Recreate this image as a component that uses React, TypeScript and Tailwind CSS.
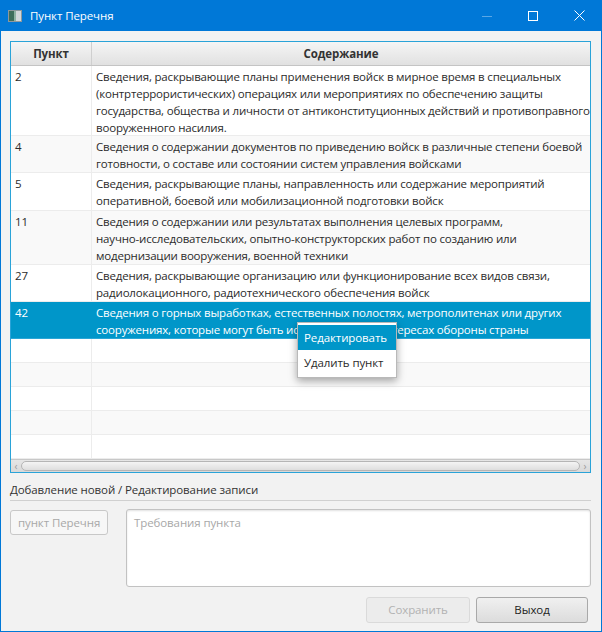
import React from "react";

const font = { fontFamily: '"Open Sans", "Noto Sans", sans-serif' };

const rows = [
  {
    n: "2",
    h: "h-[70px]",
    lines: [
      "Сведения, раскрывающие планы применения войск в мирное время в специальных",
      "(контртеррористических) операциях или мероприятиях по обеспечению защиты",
      "государства, общества и личности от антиконституционных действий и противоправного",
      "вооруженного насилия.",
    ],
  },
  {
    n: "4",
    h: "h-[37px]",
    lines: [
      "Сведения о содержании документов по приведению войск в различные степени боевой",
      "готовности, о составе или состоянии систем управления войсками",
    ],
  },
  {
    n: "5",
    h: "h-[38px]",
    lines: [
      "Сведения, раскрывающие планы, направленность или содержание мероприятий",
      "оперативной, боевой или мобилизационной подготовки войск",
    ],
  },
  {
    n: "11",
    h: "h-[54px]",
    lines: [
      "Сведения о содержании или результатах выполнения целевых программ,",
      "научно-исследовательских, опытно-конструкторских работ по созданию или",
      "модернизации вооружения, военной техники",
    ],
  },
  {
    n: "27",
    h: "h-[37px]",
    lines: [
      "Сведения, раскрывающие организацию или функционирование всех видов связи,",
      "радиолокационного, радиотехнического обеспечения войск",
    ],
  },
  {
    n: "42",
    h: "h-[37px]",
    lines: [
      "Сведения о горных выработках, естественных полостях, метрополитенах или других",
      "сооружениях, которые могут быть использованы в интересах обороны страны",
    ],
  },
];

function TitleBar() {
  return (
    <div className="h-[31px] shrink-0 bg-[#0078d7] flex items-center text-white">
      {/* window icon */}
      <svg width="14" height="12" viewBox="0 0 14 12" className="ml-[8px]">
        <rect x="0.5" y="0.5" width="13" height="11" fill="#d4d8da" stroke="#8e989c" />
        <rect x="1" y="1" width="5" height="10" fill="#3f6f5c" />
        <rect x="6" y="1" width="2" height="10" fill="#8fb3a3" />
      </svg>
      <span className="ml-[8px] text-[11.5px]">Пункт Перечня</span>
      <div className="ml-auto flex items-center h-full">
        <div className="w-[46px] h-full flex items-center justify-center">
          <svg width="10" height="10" viewBox="0 0 10 10">
            <line x1="0" y1="5.5" x2="10" y2="5.5" stroke="#5aa7e6" strokeWidth="1" />
          </svg>
        </div>
        <div className="w-[46px] h-full flex items-center justify-center">
          <svg width="10" height="10" viewBox="0 0 10 10">
            <rect x="0.5" y="0.5" width="9" height="9" fill="none" stroke="white" strokeWidth="1" />
          </svg>
        </div>
        <div className="w-[46px] h-full flex items-center justify-center">
          <svg width="11" height="11" viewBox="0 0 11 11">
            <path d="M0.5 0.5 L10.5 10.5 M10.5 0.5 L0.5 10.5" stroke="white" strokeWidth="1" />
          </svg>
        </div>
      </div>
    </div>
  );
}

function Table() {
  return (
    <div className="h-[432px] border border-[#2aa3d8] bg-white flex flex-col text-[#2b2b2b] overflow-hidden">
      {/* header */}
      <div className="h-[24px] shrink-0 flex bg-gradient-to-b from-[#f5f5f5] to-[#e1e1e1] border-b border-[#c4c4c4] font-bold text-[#333]">
        <div className="w-[81px] shrink-0 flex items-center justify-center border-r border-[#cfcfcf]">Пункт</div>
        <div className="flex-1 flex items-center justify-center">Содержание</div>
      </div>

      {/* rows */}
      <div className="flex-1 flex flex-col overflow-hidden">
        {rows.map((r, i) => {
          const selected = r.n === "42";
          const bg = selected ? "bg-[#0096c9] text-white" : i % 2 === 0 ? "bg-white" : "bg-[#f9f9f9]";
          return (
            <div key={r.n} className={`${r.h} shrink-0 flex border-b ${selected ? "border-[#2aa6d6]" : "border-[#ececec]"} ${bg}`}>
              <div className={`w-[81px] shrink-0 pl-[4px] pt-[2px] leading-[17px] border-r ${selected ? "border-[#0096c9]" : "border-[#ececec]"}`}>
                {r.n}
              </div>
              <div className="flex-1 pl-[4px] pt-[2px] leading-[17px] overflow-hidden tracking-[-0.18px]">
                {r.lines.map((l) => (
                  <div key={l} className="whitespace-nowrap">{l}</div>
                ))}
              </div>
            </div>
          );
        })}
        {[0, 1, 2, 3, 4].map((k) => (
          <div key={k} className={`h-[24px] shrink-0 flex border-b border-[#ececec] ${k % 2 === 0 ? "bg-white" : "bg-[#f9f9f9]"}`}>
            <div className="w-[81px] shrink-0 border-r border-[#ececec]" />
            <div className="flex-1" />
          </div>
        ))}
      </div>

      {/* horizontal scrollbar */}
      <div className="h-[13px] shrink-0 flex items-center bg-gradient-to-b from-[#e6e6e6] to-[#d9d9d9] border-t border-[#c8c8c8]">
        <span className="w-[10px] text-center text-[10px] leading-none text-[#9a9a9a]">‹</span>
        <div className="flex-1 h-[10px] rounded-[5px] border border-[#b5b5b5] bg-gradient-to-b from-[#f4f4f4] to-[#dedede]" />
        <span className="w-[10px] text-center text-[10px] leading-none text-[#9a9a9a]">›</span>
      </div>
    </div>
  );
}

export default function App() {
  return (
    <div
      className="w-[602px] h-[632px] bg-[#0078d7] flex flex-col relative overflow-hidden text-[11.5px] tracking-[-0.1px]"
      style={font}
    >
      <TitleBar />

      <div className="mx-[1px] mb-[1px] flex-1 bg-[#f2f2f2] pl-[9px] pr-[10px] pt-[10px] flex flex-col">
        <Table />

        <div className="mt-[8px] h-[17px] leading-[17px] text-[#333]">
          Добавление новой / Редактирование записи
        </div>
        <div className="mt-[2px] h-[1px] bg-[#d0d0d0]" />

        <div className="mt-[8px] flex items-start">
          <div className="mt-[1px] w-[98px] h-[25px] rounded-[3px] border border-[#c8c8c8] bg-[#f7f7f7] text-[#a8a8a8] flex items-center pl-[7px]">
            пункт Перечня
          </div>
          <div className="ml-[18px] flex-1 h-[78px] rounded-[3px] border border-[#c2c2c2] bg-white shadow-[inset_0_1px_2px_rgba(0,0,0,0.12)] text-[#a8a8a8] pl-[7px] pt-[4px] leading-[17px]">
            Требования пункта
          </div>
        </div>

        <div className="mt-[10px] flex justify-end pr-[3px] gap-[6px]">
          <div className="w-[104px] h-[26px] rounded-[3px] border border-[#dadada] bg-[#ececec] text-[#b2b2b2] flex items-center justify-center">
            Сохранить
          </div>
          <div className="w-[112px] h-[26px] rounded-[3px] border border-[#a9a9a9] bg-gradient-to-b from-[#f0f0f0] to-[#dcdcdc] text-[#222] flex items-center justify-center">
            Выход
          </div>
        </div>
      </div>

      {/* context menu */}
      <div className="absolute left-[297px] top-[322px] w-[100px] bg-white border border-[#b9b9b9] shadow-[0_3px_8px_rgba(0,0,0,0.35)] pt-[2px] pb-[2px]">
        <div className="h-[25px] bg-[#0096c9] text-white flex items-center pl-[6px]">Редактировать</div>
        <div className="h-[25px] text-[#2b2b2b] flex items-center pl-[6px]">Удалить пункт</div>
      </div>
    </div>
  );
}
